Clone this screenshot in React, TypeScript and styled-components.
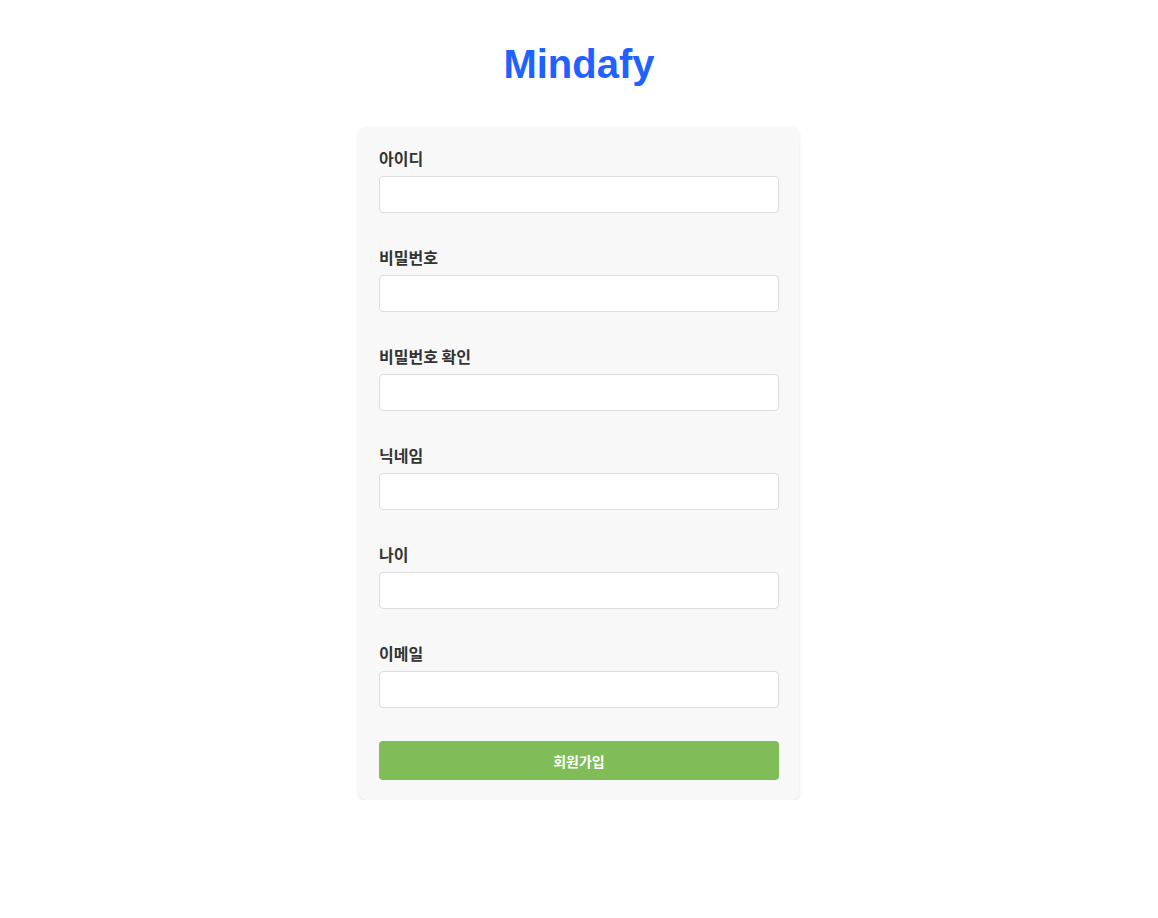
import styled, { createGlobalStyle } from "styled-components";

const GlobalStyle = createGlobalStyle`
  body {
    margin: 0;
    background: #ffffff;
    font-family: "Noto Sans CJK KR", "Noto Sans", sans-serif;
  }
`;

const Page = styled.div`
  display: flex;
  flex-direction: column;
  align-items: center;
  padding-top: 41px;
`;

const Logo = styled.h1`
  margin: 0 0 40px;
  font-family: "Liberation Sans", Arial, sans-serif;
  font-size: 40px;
  font-weight: 700;
  line-height: 46px;
  color: #1f62ff;
`;

const Card = styled.form`
  width: 440px;
  box-sizing: border-box;
  padding: 20px;
  background: #f8f8f8;
  border-radius: 8px;
  box-shadow: 0 2px 4px rgba(0, 0, 0, 0.1);
`;

const Field = styled.div`
  display: flex;
  flex-direction: column;
  margin-bottom: 33px;
`;

const Label = styled.label`
  font-size: 16px;
  font-weight: 700;
  line-height: 23px;
  color: #333333;
  margin-bottom: 6px;
`;

const Input = styled.input`
  height: 37px;
  box-sizing: border-box;
  padding: 0 10px;
  border: 1px solid #dddddd;
  border-radius: 4px;
  background: #ffffff;
  font-size: 14px;
  outline: none;
`;

const SubmitButton = styled.button`
  width: 100%;
  height: 39px;
  border: none;
  border-radius: 4px;
  background: #80bc58;
  color: #ffffff;
  font-family: "Noto Sans CJK KR", sans-serif;
  font-size: 14px;
  font-weight: 700;
  cursor: pointer;
`;

const fields = [
  { id: "username", label: "아이디", type: "text" },
  { id: "password", label: "비밀번호", type: "password" },
  { id: "passwordConfirm", label: "비밀번호 확인", type: "password" },
  { id: "nickname", label: "닉네임", type: "text" },
  { id: "age", label: "나이", type: "number" },
  { id: "email", label: "이메일", type: "email" },
];

export default function App() {
  return (
    <>
      <GlobalStyle />
      <Page>
        <Logo>Mindafy</Logo>
        <Card onSubmit={(e) => e.preventDefault()}>
          {fields.map((field) => (
            <Field key={field.id}>
              <Label htmlFor={field.id}>{field.label}</Label>
              <Input id={field.id} type={field.type} />
            </Field>
          ))}
          <SubmitButton type="submit">회원가입</SubmitButton>
        </Card>
      </Page>
    </>
  );
}
